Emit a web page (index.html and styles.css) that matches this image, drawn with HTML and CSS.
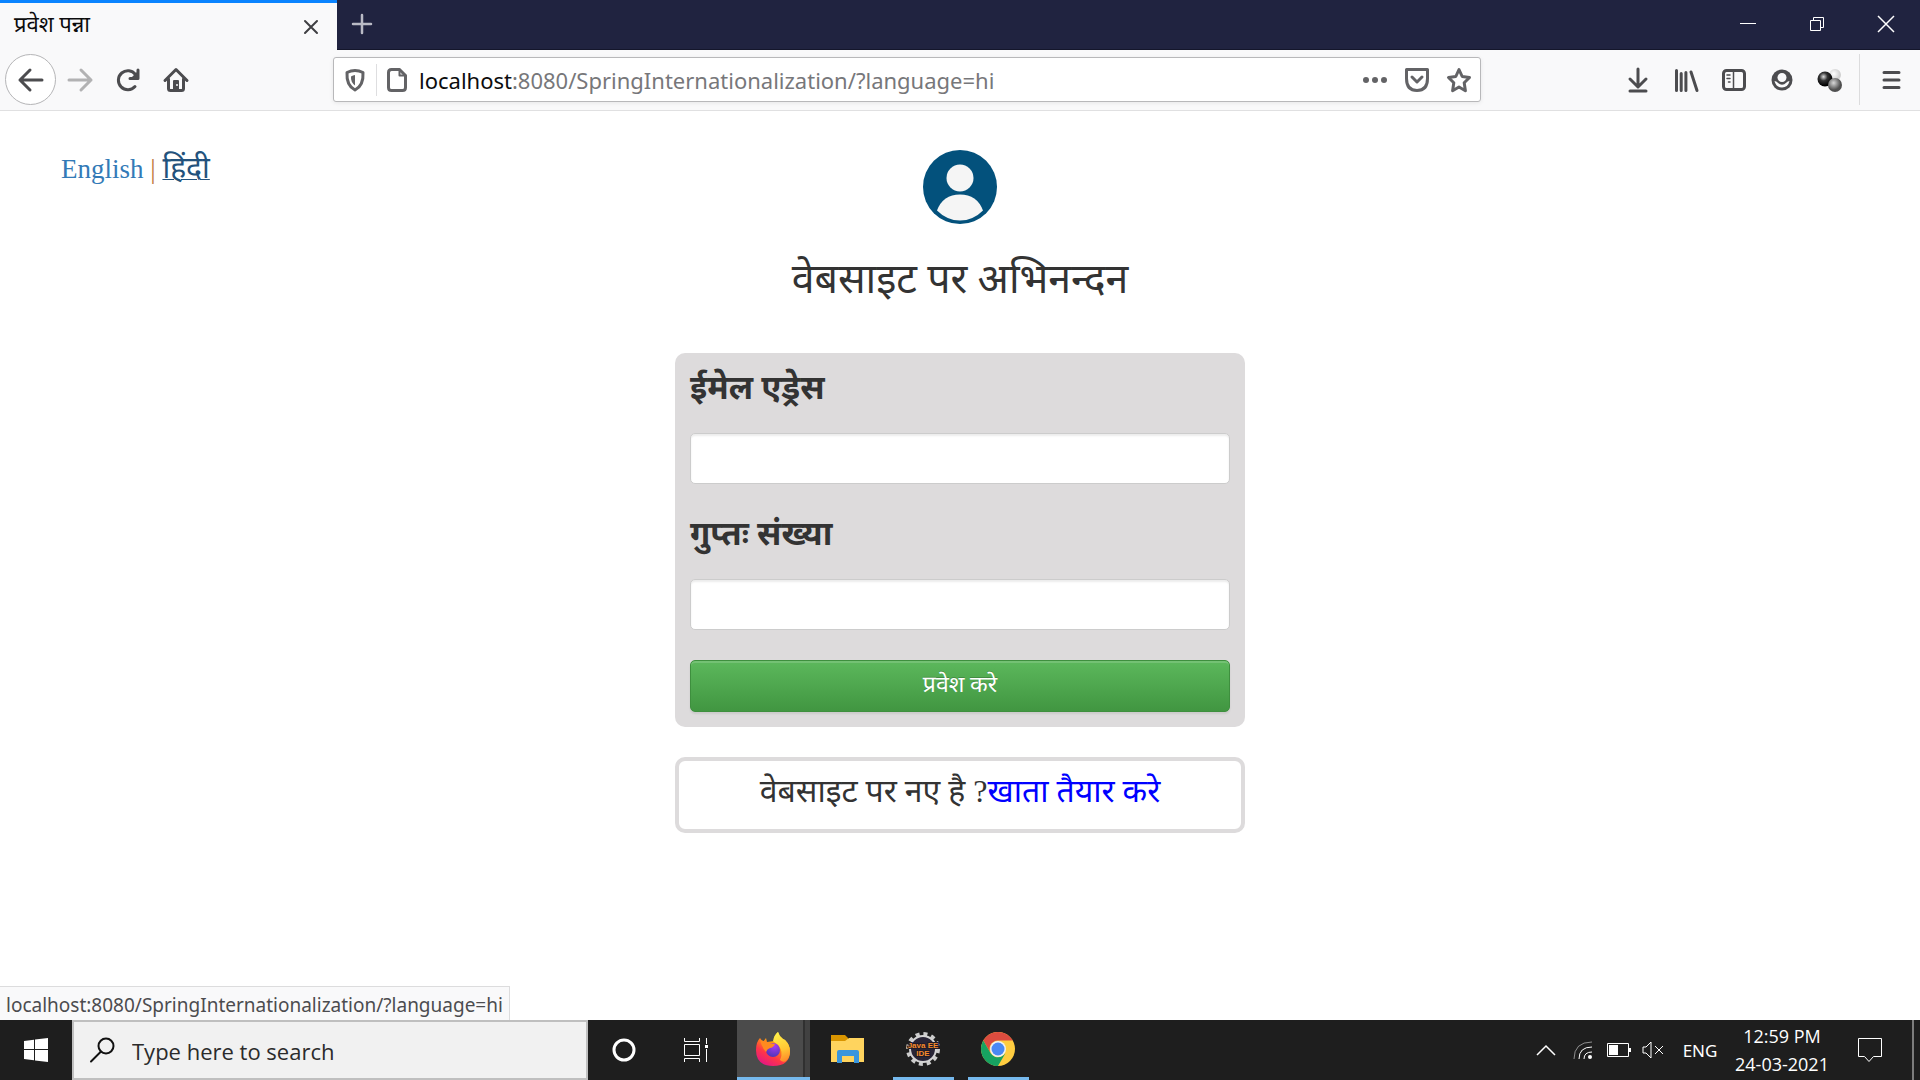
FILE: index.html
```html
<!DOCTYPE html>
<html lang="hi">
<head>
<meta charset="utf-8">
<title>प्रवेश पन्ना</title>
<link rel="stylesheet" href="styles.css">
</head>
<body>
<header class="tabstrip">
  <div class="tab">
    <span class="tab-title">प्रवेश पन्ना</span>
    <button class="icon-btn tab-close" aria-label="Close tab"><svg width="16" height="16" viewBox="0 0 16 16" class="line"><path d="M2 2l12 12M14 2L2 14"/></svg></button>
  </div>
  <button class="icon-btn new-tab" aria-label="New tab"><svg width="24" height="24" viewBox="0 0 24 24" class="line"><path d="M12 3v18M3 12h18" stroke-width="2.500"/></svg></button>
  <div class="window-buttons">
    <button class="icon-btn" aria-label="Minimize"><svg width="16" height="16" viewBox="0 0 16 16" class="thin"><path d="M0 7.500h16"/></svg></button>
    <button class="icon-btn" aria-label="Restore"><svg width="16" height="16" viewBox="0 0 16 16" class="thin"><path d="M1.500 4.500h10v10h-10zM4.500 4.500v-3h10v10h-3"/></svg></button>
    <button class="icon-btn" aria-label="Close"><svg width="16" height="16" viewBox="0 0 16 16" class="thin"><path d="M0 0l16 16M16 0L0 16" stroke-width="1.500"/></svg></button>
  </div>
</header>

<div class="toolbar">
  <div class="nav-buttons">
    <button class="icon-btn back" aria-label="Back"><svg width="28" height="28" viewBox="0 0 28 28" class="bold"><path d="M3 14h22M13 4L3 14l10 10"/></svg></button>
    <button class="icon-btn forward" aria-label="Forward"><svg width="28" height="28" viewBox="0 0 28 28" class="bold"><path d="M3 14h22M15 4l10 10-10 10"/></svg></button>
    <button class="icon-btn" aria-label="Reload"><svg width="24" height="24" viewBox="0 0 24 24" class="bold"><path d="M19 18.500A9.500 9.500 0 1 1 19.500 6.500"/><path d="M22 2v8.500h-8" /><path d="M22 3v7.500h-7.500z" fill="currentColor" stroke="none"/></svg></button>
    <button class="icon-btn" aria-label="Home"><svg width="26" height="26" viewBox="0 0 26 26" class="bold"><path d="M2 13.500L13 2.500l11 11"/><path d="M5.500 12v9.500q0 2 2 2h11q2 0 2-2V12"/><path d="M10 23v-9q0-1 1-1h4q1 0 1 1v9z" fill="currentColor" stroke="none"/><circle cx="14" cy="18" r="1" fill="#f9f9fa" stroke="none"/></svg></button>
  </div>
  <div class="urlbar">
    <button class="icon-btn shield" aria-label="Protections"><svg width="22" height="24" viewBox="0 0 22 24" class="bold"><path d="M3 4.500Q11 .5 19 4.500q.8 13-8 17.500Q2.200 17.500 3 4.500z"/><path d="M11 7v10.500Q6.500 14 7 8.500q2-1.300 4-1.500z" fill="currentColor" stroke="none"/></svg></button>
    <span class="divider"></span>
    <button class="icon-btn" aria-label="Site information"><svg width="24" height="26" viewBox="0 0 24 26" class="bold"><path d="M13.500 2.500H5.500q-3 0-3 3v15q0 3 3 3h11q3 0 3-3v-12z"/><path d="M13.500 2.500v6h6" stroke-width="2"/></svg></button>
    <div class="url" aria-label="Address"><b>localhost</b>:8080/SpringInternationalization/?language=hi</div>
    <button class="icon-btn" aria-label="Page actions"><svg width="26" height="26" viewBox="0 0 26 26" fill="currentColor"><circle cx="4" cy="13" r="3"/><circle cx="13" cy="13" r="3"/><circle cx="22" cy="13" r="3"/></svg></button>
    <button class="icon-btn" aria-label="Save to Pocket"><svg width="26" height="26" viewBox="0 0 26 26" class="bold"><path d="M2.500 2.500h21v9q0 12-10.500 12t-10.500-12z"/><path d="M8 10l5 5 5-5"/></svg></button>
    <button class="icon-btn" aria-label="Bookmark"><svg width="26" height="26" viewBox="0 0 26 26" class="bold"><path d="M13 2.500l3.200 7 7.300 1-5.300 5.200 1.200 8L13 20l-6.400 3.700 1.200-8L2.500 10.500l7.300-1z"/></svg></button>
  </div>
  <div class="tools">
    <button class="icon-btn" aria-label="Downloads"><svg width="26" height="26" viewBox="0 0 26 26" class="bold"><path d="M13 2v17M5 12l8 8 8-8M5 24h16"/></svg></button>
    <button class="icon-btn" aria-label="Library"><svg width="26" height="26" viewBox="0 0 26 26" class="bold"><path d="M3.500 3.500v20M8.200 6.500v17M12.900 5.500v18M18 5l6 18.500"/></svg></button>
    <button class="icon-btn" aria-label="Sidebar"><svg width="26" height="26" viewBox="0 0 26 26" class="bold"><rect x="2.500" y="3.500" width="21" height="19" rx="3"/><path d="M12.500 4v18" stroke-width="1.500"/><path d="M6 8h3M6 11.500h3M7.500 15H9" stroke-width="1.500"/></svg></button>
    <button class="icon-btn" aria-label="Account"><svg width="26" height="26" viewBox="0 0 26 26"><circle cx="13" cy="13" r="10.500" fill="currentColor"/><path d="M5.500 14q2 .2 3 1.500 4.500 4.500 9 0 1-1.300 3-1.500Q19 20.500 13 20.500T5.500 14z" fill="#f9f9fa"/><circle cx="13" cy="10.500" r="4.500" fill="#f9f9fa"/></svg></button>
    <button class="icon-btn" aria-label="Extension"><svg width="26" height="26" viewBox="0 0 26 26"><defs><radialGradient id="dark" cx=".4" cy=".35" r=".6"><stop offset="0" stop-color="#ddd"/><stop offset=".45" stop-color="#333"/><stop offset="1"/></radialGradient><radialGradient id="pale" cx=".4" cy=".4"><stop offset="0" stop-color="#fff"/><stop offset="1" stop-color="#d0d0d0"/></radialGradient><radialGradient id="grey" cx=".4" cy=".35"><stop offset="0" stop-color="#d8d8d8"/><stop offset="1" stop-color="#505050"/></radialGradient></defs><circle cx="18" cy="8" r="6" fill="url(#pale)"/><circle cx="8" cy="12" r="7.500" fill="url(#dark)"/><circle cx="18" cy="18" r="7" fill="url(#grey)"/></svg></button>
    <span class="tool-divider"></span>
    <button class="icon-btn menu" aria-label="Menu"><svg width="24" height="24" viewBox="0 0 24 24" class="bold"><path d="M4 4.500h15M4 12h15M4 19.500h15"/></svg></button>
  </div>
</div>

<div class="viewport">
  <nav class="languages"><a href="?language=en">English</a> | <a class="hovered" href="?language=hi">हिंदी</a></nav>
  <main class="login">
    <svg class="avatar" width="74" height="74" viewBox="0 0 74 74"><circle cx="37" cy="37" r="37" fill="#03517c"/><circle cx="37" cy="28" r="13.500" fill="#f5f5f5"/><path d="M14 60.500Q20 44.500 37 44.500t23 16Q50 70.500 37 70.500t-23-10z" fill="#f5f5f5"/></svg>
    <h1>वेबसाइट पर अभिनन्दन</h1>
    <form class="card">
      <label for="email">ईमेल एड्रेस</label>
      <input id="email" type="text">
      <label for="password">गुप्तः संख्या</label>
      <input id="password" type="password">
      <button class="submit" type="button">प्रवेश करे</button>
    </form>
    <p class="signup">वेबसाइट पर नए है ?<a href="#">खाता तैयार करे</a></p>
  </main>
  <div class="status">localhost:8080/SpringInternationalization/?language=hi</div>
</div>

<footer class="taskbar">
  <button class="icon-btn start" aria-label="Start"><svg width="24" height="24" viewBox="0 0 24 24" fill="#fff"><path d="M0 3l10-1.300V11H0zM11 1.500L24 0v11H11zM0 12h10v10.300L0 21zM11 12h13v12l-13-1.500z"/></svg></button>
  <label class="search"><svg width="26" height="26" viewBox="0 0 26 26" class="line"><circle cx="16" cy="9" r="7.500"/><path d="M11 14.500L1 24.500"/></svg><input type="text" placeholder="Type here to search" aria-label="Search"></label>
  <button class="icon-btn system" aria-label="Cortana"><svg width="24" height="24" viewBox="0 0 24 24" fill="none"><circle cx="12" cy="12" r="10" stroke="#fff" stroke-width="3"/></svg></button>
  <button class="icon-btn system" aria-label="Task view"><svg width="26" height="24" viewBox="0 0 26 24" class="thin"><path d="M1.500 0v3.500h15V0M1.500 6.500h15v11h-15zM1.500 24v-3.500h15V24M23.500 0v6M23.500 11v13"/><path d="M22 7h3v3h-3z" fill="#fff" stroke="none"/></svg></button>
  <div class="apps">
    <button class="icon-btn app active" aria-label="Firefox"><svg width="36" height="36" viewBox="0 0 36 36"><defs><linearGradient id="fox" x1=".85" y1="0" x2=".25" y2="1"><stop offset="0" stop-color="#fff44f"/><stop offset=".4" stop-color="#ff980e"/><stop offset=".7" stop-color="#ff3647"/><stop offset="1" stop-color="#e31587"/></linearGradient><linearGradient id="flame" x1=".4" y1="0" x2=".6" y2="1"><stop offset="0" stop-color="#fff04a"/><stop offset=".6" stop-color="#ffc633"/><stop offset="1" stop-color="#ff8a2a"/></linearGradient><radialGradient id="globe" cx=".6" cy=".2" r=".8"><stop offset="0" stop-color="#a83af5"/><stop offset="1" stop-color="#5136b8"/></radialGradient></defs><path d="M5 7l3 4 3-4 1 4 7-1Q19 4 23 1q1 4 5 7l2 1q5 5 5 11 0 15-17 15T1 19Q1 11 5 7z" fill="url(#fox)"/><path d="M18 10Q19 4 23 1q1 4 5 7l2 1q5 5 5 11 0 6-4 10-3 2-6-1 4-8-2-15z" fill="url(#flame)"/><circle cx="18" cy="19" r="7" fill="url(#globe)"/><path d="M5 9q6 1 9 3l6 1q-2 4-5 4-3 1-4 4-4-4-6-12z" fill="#ff8a1f"/></svg></button>
    <button class="icon-btn app" aria-label="File Explorer"><svg width="34" height="30" viewBox="0 0 34 30"><path d="M0 1h14l3 3v4H0z" fill="#d99500"/><path d="M0 7h14l4-3h15v24H0z" fill="#ffd45e"/><path d="M6 29V18q0-2 2-2h18q2 0 2 2v11h-5v-7H11v7z" fill="#3a96dd"/></svg></button>
    <button class="icon-btn app open" aria-label="Java EE IDE"><svg width="36" height="36" viewBox="0 0 36 36"><circle cx="18" cy="18" r="15" fill="none" stroke="#ccc" stroke-width="4" stroke-dasharray="4 3.850"/><circle cx="18" cy="18" r="13" fill="#292536" stroke="#d4d4d4" stroke-width="2"/><text x="18" y="17" class="ide-text">Java EE</text><text x="18" y="25" class="ide-text">IDE</text></svg></button>
    <button class="icon-btn app open" aria-label="Chrome"><svg width="34" height="34" viewBox="0 0 34 34"><circle cx="17" cy="17" r="17" fill="#ffcd40"/><path d="M2.300 8.500A17 17 0 0 1 31.700 8.500H17A8.500 8.500 0 0 0 9.600 21.200z" fill="#db4c3f"/><path d="M2.300 8.500A17 17 0 0 0 17 34l7.400-12.800q-5 6-11 3.200-2-.7-3.800-3.200z" fill="#17a261"/><circle cx="17" cy="17" r="8" fill="#f1f1f1"/><circle cx="17" cy="17" r="6.500" fill="#4a89f3"/></svg></button>
  </div>
  <div class="tray">
    <button class="icon-btn caret" aria-label="Show hidden icons"><svg width="20" height="12" viewBox="0 0 20 12" class="tray-line"><path d="M1 11l9-9 9 9" stroke-width="1.500"/></svg></button>
    <button class="icon-btn wifi" aria-label="Network"><svg width="20" height="20" viewBox="0 0 20 20" class="tray-line"><path d="M1 19Q1 2 19 2" opacity=".5"/><path d="M6 19Q6 7 19 7M11 19q0-7 8-7"/><circle cx="17" cy="17" r="2" fill="#fff" stroke="none"/></svg></button>
    <button class="icon-btn battery" aria-label="Battery"><svg width="24" height="14" viewBox="0 0 24 14" class="thin"><path d="M.5.500h21v13H.5z"/><path d="M2 2h9v10H2zM22 5h2v4h-2z" fill="#fff" stroke="none"/></svg></button>
    <button class="icon-btn volume" aria-label="Volume"><svg width="22" height="20" viewBox="0 0 22 20" class="tray-line"><path d="M1 7h3l5-5v16l-5-5H1zM13 6l8 8M21 6l-8 8"/></svg></button>
    <button class="lang">ENG</button>
    <button class="clock"><time>12:59 PM</time><time>24-03-2021</time></button>
    <button class="icon-btn notices" aria-label="Notifications"><svg width="26" height="26" viewBox="0 0 26 26" class="tray-line"><path d="M1.500 1.500h23v18h-8l-4.500 5-4.500-5h-6z"/></svg></button>
    <span class="show-desktop"></span>
  </div>
</footer>
</body>
</html>
```
FILE: styles.css
```css
* { box-sizing: border-box; }

body {
  margin: 0;
  min-height: 100vh;
  display: flex;
  flex-direction: column;
  background: #fff;
  color: #333;
  font-family: "Liberation Serif", "Noto Sans Devanagari", "Noto Sans", serif;
}

button {
  padding: 0;
  border: 0;
  background: none;
  color: inherit;
  font-family: inherit;
}

svg { display: block; flex: none; overflow: visible; }

.icon-btn { display: flex; align-items: center; justify-content: center; flex: none; }

.line, .thin, .bold, .tray-line { fill: none; stroke: currentColor; stroke-width: 2; }
.line, .bold { stroke-linecap: round; stroke-linejoin: round; }
.thin { stroke-width: 1; }
.bold { stroke-width: 3; }
.tray-line { stroke-width: 1; }

/* Tabs */
.tabstrip { display: flex; height: 50px; background: #202340; border-bottom: 1px solid #14162b; color: #fff; }
.tab {
  display: flex;
  align-items: center;
  justify-content: space-between;
  width: 337px;
  height: 50px;
  padding: 0 16px 0 14px;
  border-top: 3px solid #0a84ff;
  background: #f9f9fa;
  color: #0c0c0d;
}
.tab-title { font-size: 22px; }
.tab-close { width: 20px; height: 20px; color: #3f3f42; }
.new-tab { width: 50px; padding-bottom: 2px; color: #b9bac5; }
.window-buttons { display: flex; margin-left: auto; padding-bottom: 2px; }
.window-buttons .icon-btn { width: 69px; }

/* Toolbar */
.toolbar {
  display: flex;
  align-items: center;
  height: 61px;
  padding-bottom: 1px;
  border-bottom: 1px solid #e0e0e1;
  background: #f9f9fa;
  color: #4c4c4f;
}
.nav-buttons { display: flex; align-items: center; width: 200px; padding-left: 5px; }
.nav-buttons .icon-btn { width: 48px; height: 48px; }
.nav-buttons .back { width: 51px; height: 51px; border: 1px solid #b5b5b7; border-radius: 50%; background: #fff; }
.nav-buttons .forward { color: #b2b2b3; }
.urlbar {
  display: flex;
  align-items: center;
  flex: 1;
  height: 45px;
  margin: 0 133px;
  border: 1px solid #b8b8ba;
  border-radius: 3px;
  background: #fff;
  box-shadow: 0 1px 4px rgba(0, 0, 0, .08);
  color: #636366;
  font-family: "Noto Sans", sans-serif;
}
.urlbar .icon-btn { width: 42px; height: 42px; }
.divider { width: 1px; height: 32px; background: #dedee0; }
.url { flex: 1; font-size: 22px; line-height: 32px; color: #77777a; white-space: nowrap; }
.url b { font-weight: 400; color: #0c0c0d; }
.tools { display: flex; align-items: center; }
.tools .icon-btn { width: 48px; height: 48px; }
.tool-divider { width: 1px; height: 51px; margin-left: 5px; background: #dcdcdd; }
.tools .menu { width: 60px; padding-left: 4px; }

/* Page */
.viewport {
  position: relative;
  flex: 1;
  display: grid;
  grid-template-columns: 1fr 570px 1fr;
  align-items: start;
  padding: 39px 0;
}
.languages { padding-left: 61px; font-size: 27px; line-height: 36px; color: #c0783c; }
.languages a { color: #337ab7; text-decoration: none; }
.languages .hovered { color: #23527c; font-size: 30px; text-decoration: underline; text-decoration-thickness: 1px; }
.login { display: flex; flex-direction: column; }
.avatar { align-self: center; }
h1 { margin: 25px 0 44px; font-size: 41px; line-height: 60px; font-weight: 400; text-align: center; }
.card {
  display: flex;
  flex-direction: column;
  padding: 15px;
  border-radius: 10px;
  background: #dddbdc;
}
.card label { height: 48px; font-size: 33px; line-height: 40px; font-weight: 700; }
.card input {
  width: 100%;
  height: 51px;
  margin: 17px 0 30px;
  border: 1px solid #ccc;
  border-radius: 5px;
  background: #fff;
  box-shadow: inset 0 2px 2px rgba(0, 0, 0, .08);
}
.submit {
  height: 52px;
  border: 1px solid #3e8f3e;
  border-radius: 5px;
  background: linear-gradient(#5cb85c, #419641);
  box-shadow: inset 0 2px 0 rgba(255, 255, 255, .15), 0 2px 2px rgba(0, 0, 0, .08);
  color: #fff;
  font-size: 23px;
  text-shadow: 0 -1px 0 rgba(0, 0, 0, .2);
}
.signup {
  height: 76px;
  margin: 30px 0 0;
  padding-top: 6px;
  border: 4px solid #dddbdc;
  border-radius: 10px;
  font-size: 32px;
  line-height: 48px;
  text-align: center;
}
.signup a { color: #00f; text-decoration: none; }
.status {
  position: absolute;
  left: 0;
  bottom: 0;
  height: 34px;
  padding: 0 6px;
  border: 1px solid #dcdcdd;
  border-width: 1px 1px 0 0;
  background: #f9f9fa;
  color: #4c4c4f;
  font: 19px/36px "Noto Sans", sans-serif;
}

/* Taskbar */
.taskbar {
  display: flex;
  height: 60px;
  background: #1e1e1e;
  color: #fff;
  font-family: "Noto Sans", sans-serif;
}
.start { width: 72px; }
.search {
  display: flex;
  align-items: center;
  width: 516px;
  padding: 0 16px;
  gap: 16px;
  border: 2px solid #bfbfbf;
  background: #f1f1f1;
  color: #111;
}
.search input { flex: 1; min-width: 0; padding: 2px 0 0; border: 0; background: none; font: 22px/32px "Open Sans", sans-serif; }
.search input::placeholder { color: #2b2b2b; opacity: 1; }
.system { width: 72px; }
.apps { display: flex; gap: 14px; padding-left: 5px; }
.app { width: 61px; padding-right: 2px; border-bottom: 3px solid transparent; }
.open { border-color: #76b9ed; }
.apps .active { width: 73px; margin-right: -6px; border-color: #76b9ed; background: linear-gradient(90deg, #4b4b4b 66px, #303030 66px, #303030 68px, #414141 68px); }
.ide-text {
  fill: #f58a2c;
  stroke: #1e1a28;
  stroke-width: 2px;
  paint-order: stroke;
  font: 700 8px "Liberation Sans", sans-serif;
  text-anchor: middle;
}
.tray { display: flex; margin-left: auto; }
.caret { width: 36px; }
.wifi { width: 38px; }
.battery, .volume { width: 34px; }
.lang { width: 60px; font-size: 17px; }
.clock { display: flex; flex-direction: column; justify-content: center; width: 104px; font: 18px/28px "Open Sans", sans-serif; text-align: center; }
.notices { width: 72px; }
.show-desktop { width: 14px; border: solid #1e1e1e; border-width: 0 6px; background: #7c7c7c; }
```
